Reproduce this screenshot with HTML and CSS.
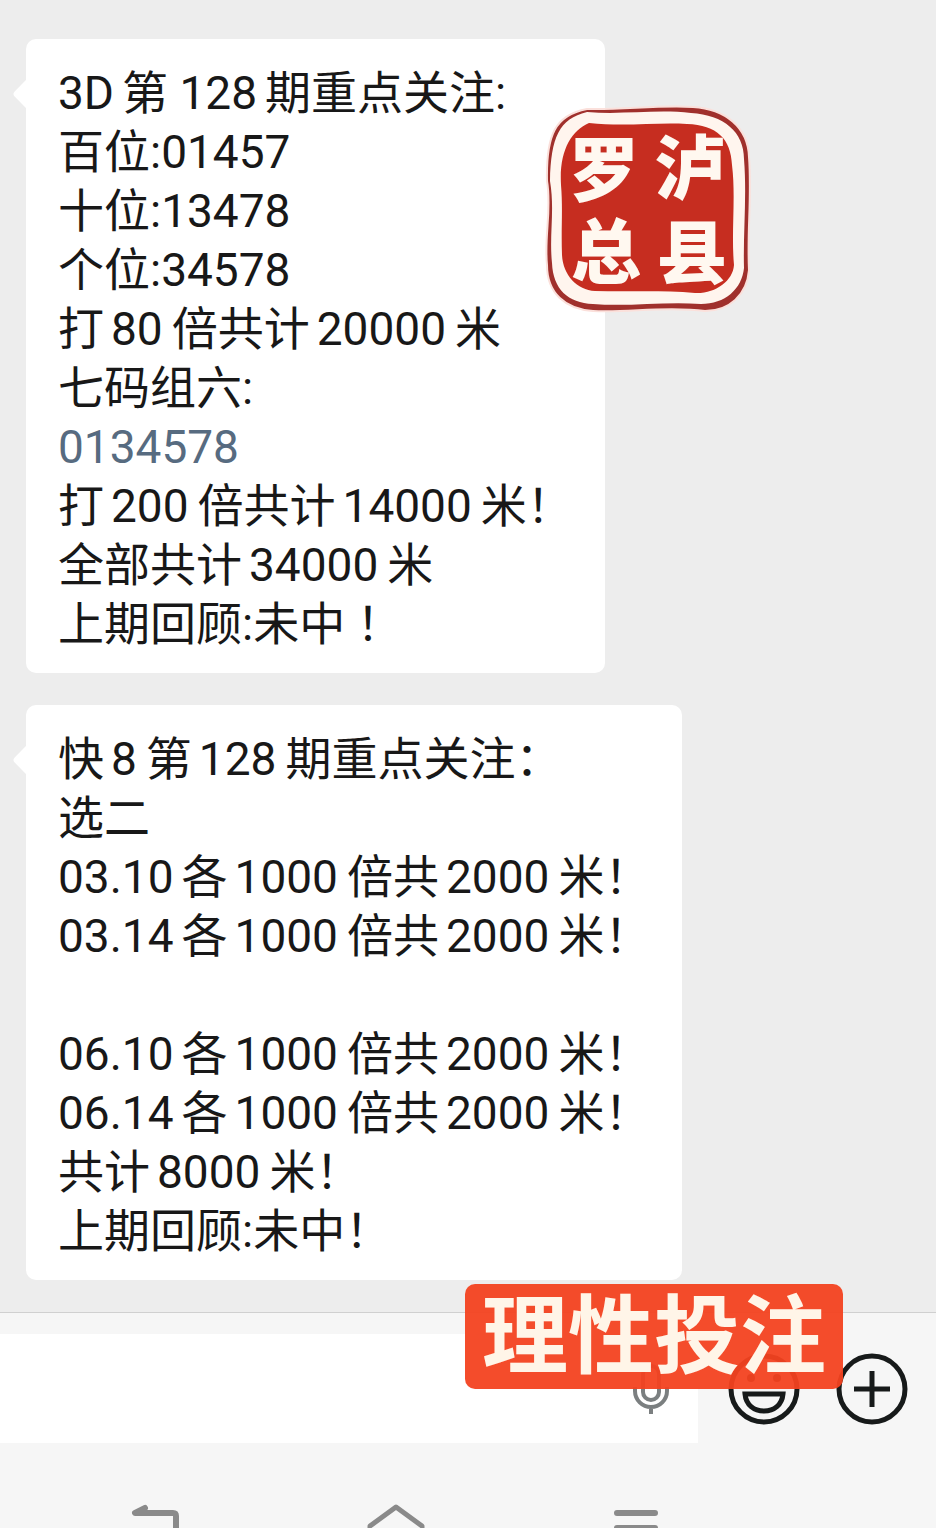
FILE: index.html
```html
<!DOCTYPE html>
<html lang="zh-CN">
<head>
  <meta charset="UTF-8">
  <meta name="viewport" content="width=device-width, initial-scale=1">
  <title>重点关注</title>
  <link rel="stylesheet" href="styles.css">
</head>
<body>
  <main class="chat">
    <div class="bubble">
      <p><span class="first">3D</span>第 <span class="first">128</span>期重点关注:</p>
      <p>百位:01457</p>
      <p>十位:13478</p>
      <p>个位:34578</p>
      <p>打<span class="num">80</span>倍共计<span class="num">20000</span>米</p>
      <p>七码组六:</p>
      <p><a href="#">0134578</a></p>
      <p>打<span class="num">200</span>倍共计<span class="num">14000</span>米！</p>
      <p>全部共计<span class="num">34000</span>米</p>
      <p>上期回顾:未中 ！</p>
    </div>

    <div class="bubble">
      <p>快<span class="num">8</span>第<span class="num">128</span>期重点关注：</p>
      <p>选二</p>
      <p><span class="first">03.10</span>各<span class="num">1000</span>倍共<span class="num">2000</span>米！</p>
      <p><span class="first">03.14</span>各<span class="num">1000</span>倍共<span class="num">2000</span>米！</p>
      <p><br></p>
      <p><span class="first">06.10</span>各<span class="num">1000</span>倍共<span class="num">2000</span>米！</p>
      <p><span class="first">06.14</span>各<span class="num">1000</span>倍共<span class="num">2000</span>米！</p>
      <p>共计<span class="num">8000</span>米！</p>
      <p>上期回顾:未中！</p>
    </div>

    <svg class="seal" viewBox="0 0 206 208" role="img" aria-label="泸县罗总">
      <path d="M42 4 C78 5 112 0 148 2 C180 4 203 22 204 52 C207 92 202 126 204 165 C202 190 184 206 160 206 C120 201 82 208 48 206 C20 204 2 188 2 160 C-1 130 7 105 2 76 C1 30 10 10 42 4Z" fill="#a0302c" stroke="#fbe0db" stroke-width="2"/>
      <path d="M42 7 C78 10 112 4 146 8 C179 10 199 27 199 54 C202 92 198 128 199 163 C197 184 180 199 156 199 C120 196 84 202 48 199 C23 198 8 184 7 158 C4 130 10 105 5 76 C6 32 14 14 42 7Z" fill="#fff5ee"/>
      <path d="M44 18 C80 22 112 17 142 19 C172 20 186 34 187 60 C191 92 186 128 189 160 C188 176 170 189 150 188 C118 185 84 187 50 186 C32 185 18 170 17 150 C16 124 18 104 16 80 C14 46 26 26 44 18Z" fill="#c62d20"/>
      <g class="seal-text">
        <text x="24" y="91">罗</text>
        <text x="110" y="89">泸</text>
        <text x="26" y="173">总</text>
        <text x="112" y="174">县</text>
      </g>
    </svg>
  </main>

  <footer class="bottom">
    <div class="composer">
      <div class="field">
        <input type="text" aria-label="输入消息">
        <button class="mic" aria-label="语音输入">
          <svg viewBox="0 0 36 52" fill="none" stroke="#7b7f80" stroke-width="4">
            <rect x="10" y="3" width="16" height="34" rx="8"/>
            <path d="M2 24v4a16 16 0 0 0 32 0v-4M18 43v8"/>
          </svg>
        </button>
      </div>
      <button class="round" aria-label="表情">
        <svg viewBox="0 0 72 72" fill="none" stroke="#171a1a" stroke-width="5">
          <circle cx="36" cy="36" r="33"/>
          <circle cx="23" cy="25" r="4" fill="#171a1a" stroke="none"/>
          <circle cx="49" cy="25" r="4" fill="#171a1a" stroke="none"/>
          <path d="M17 41h38c-1 11-9 17-19 17s-18-6-19-17z"/>
        </svg>
      </button>
      <button class="round" aria-label="更多">
        <svg viewBox="0 0 72 72" fill="none" stroke="#171a1a" stroke-width="5">
          <circle cx="36" cy="36" r="33"/>
          <path d="M18 36h36M36 18v36"/>
        </svg>
      </button>
    </div>
    <div class="notice">理性投注</div>

    <nav class="keys">
      <button aria-label="返回">
        <svg viewBox="0 0 50 48" width="50" fill="none" stroke="#8a8a8a" stroke-width="6" stroke-linejoin="round" stroke-linecap="round">
          <path d="M14 5L4 10h38q3 0 3 3v28H8"/>
        </svg>
      </button>
      <button aria-label="主页">
        <svg viewBox="0 0 60 48" width="60" fill="none" stroke="#8a8a8a" stroke-width="5" stroke-linejoin="round" stroke-linecap="round">
          <path d="M4 23L30 4l26 19v22H4z"/>
        </svg>
      </button>
      <button aria-label="菜单">
        <svg viewBox="0 0 48 48" width="48" fill="none" stroke="#8a8a8a" stroke-width="6" stroke-linecap="round">
          <path d="M5 10h38M5 25h38M5 40h38"/>
        </svg>
      </button>
    </nav>
  </footer>
</body>
</html>
```
FILE: styles.css
```css
* {
  box-sizing: border-box;
}
body {
  margin: 0;
  height: 100vh;
  overflow: hidden;
  background-color: #f6f6f6;
  color: #181818;
  font-family: Roboto, "Noto Sans CJK SC", sans-serif;
}
button {
  padding: 0;
  border: none;
  background: none;
  cursor: pointer;
}
svg {
  display: block;
}
.chat {
  position: relative;
  display: flex;
  flex-direction: column;
  align-items: flex-start;
  gap: 32px;
  padding: 39px 26px 32px;
  background-color: #ededed;
}
.bubble {
  position: relative;
  padding: 25px 32px 19px;
  border-radius: 10px;
  background-color: white;
  font-size: 46px;
  line-height: 59px;
}
.bubble::before {
  content: "";
  position: absolute;
  left: -9px;
  top: 43px;
  width: 24px;
  height: 24px;
  border-radius: 4px;
  background-color: white;
  transform: rotate(45deg);
}
.bubble p {
  margin: 0;
  height: 59px;
}
.bubble a {
  color: #576b80;
  text-decoration: none;
}
.num {
  margin: 0 9px 0 7px;
}
.first {
  margin-right: 8px;
}
.seal {
  position: absolute;
  left: 545px;
  top: 105px;
  width: 206px;
}
.seal-text {
  font-size: 70px;
  font-weight: 900;
  fill: #fff8f0;
}

/* 底部输入栏 */
.bottom {
  position: relative;
  border-top: 1px solid #d0d0d0;
  padding-top: 21px;
}
.composer {
  display: flex;
  align-items: center;
  gap: 36px;
  padding-right: 28px;
}
.field {
  position: relative;
  flex: 1;
  height: 109px;
  margin-right: -6px;
}
.field input {
  width: 100%;
  height: 100%;
  padding: 0 80px 0 24px;
  border: none;
  outline: none;
  font-size: 46px;
  background-color: white;
}
.mic {
  position: absolute;
  right: 29px;
  top: 29px;
  width: 36px;
}
.round {
  width: 72px;
  height: 72px;
}
.notice {
  position: absolute;
  left: 465px;
  top: -29px;
  padding: 3px 17px 0;
  border-radius: 10px;
  background-color: rgba(243, 66, 32, 0.95);
  color: #fff5e8;
  font-size: 86px;
  font-weight: 700;
  line-height: 102px;
}
.keys {
  display: flex;
  justify-content: space-between;
  padding: 60px 29.5% 0 14%;
}
```
